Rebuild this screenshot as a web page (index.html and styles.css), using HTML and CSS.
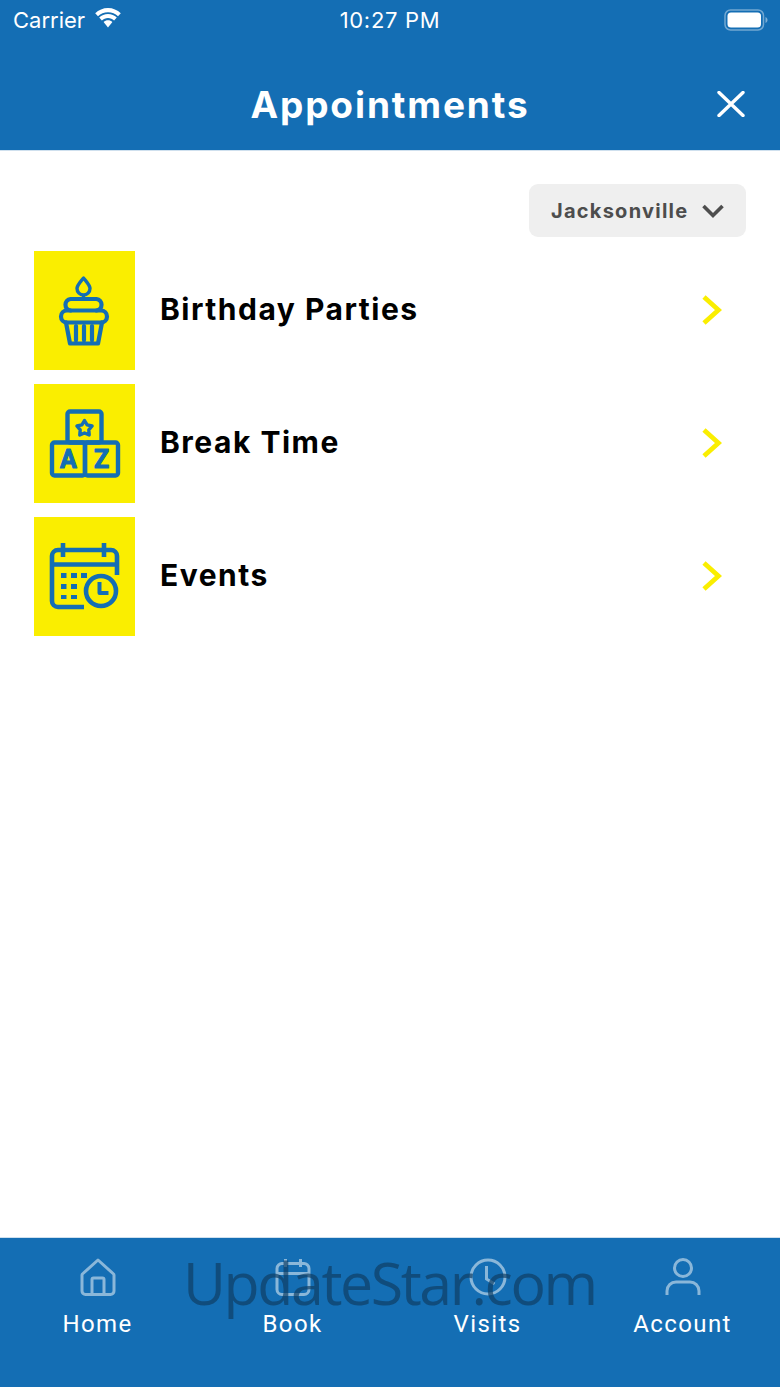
FILE: index.html
```html
<!DOCTYPE html>
<html lang="en">
<head>
<meta charset="utf-8">
<title>Appointments</title>
<link rel="stylesheet" href="styles.css">
</head>
<body>
<div class="app">
  <header class="header">
    <div class="status">
      <div class="status-left">
        <span>Carrier</span>
        <svg class="wifi" viewBox="0 0 28 20" width="28" height="20"><path d="M14 4.200c3.900 0 7.400 1.500 10 4l2.800-2.900C23.400 2 18.900 0 14 0S4.600 2 1.200 5.300L4 8.200c2.600-2.500 6.100-4 10-4z" fill="#fff"/><path d="M14 10c2.400 0 4.500.9 6.100 2.400l2.700-2.800C20.500 7.400 17.400 6 14 6S7.500 7.400 5.200 9.600l2.700 2.800C9.500 10.900 11.600 10 14 10z" fill="#fff"/><path d="M14 12.200c-1.700 0-3.200.6-4.400 1.700L14 19.500l4.400-5.600c-1.200-1.100-2.700-1.700-4.400-1.700z" fill="#fff"/></svg>
      </div>
      <span class="status-time">10:27 PM</span>
      <div class="status-right">
        <svg viewBox="0 0 44 22" width="44" height="22"><rect x="1" y="1" width="38.500" height="20" rx="5.500" fill="none" stroke="#fff" stroke-opacity=".4" stroke-width="1.500"/><rect x="3.500" y="3.500" width="33.500" height="15" rx="3.500" fill="#fff"/><path d="M41.500 8v6c1.200-.5 2-1.700 2-3s-.8-2.500-2-3z" fill="#fff" fill-opacity=".45"/></svg>
      </div>
    </div>
    <div class="nav">
      <h1 class="title">Appointments</h1>
      <svg class="close" viewBox="0 0 28 26" width="28" height="26"><path d="M2 1.500 26 24.500M26 1.500 2 24.500" stroke="#fff" stroke-width="3.400" stroke-linecap="round" fill="none"/></svg>
    </div>
  </header>

  <main class="content">
    <div class="filter-row">
      <div class="select">
        <span>Jacksonville</span>
        <svg viewBox="0 0 24 16" width="24" height="16"><path d="M2.500 3 12 12.500 21.500 3" stroke="#4d4d4d" stroke-width="3.600" fill="none"/></svg>
      </div>
    </div>
    <ul class="list">
      <li class="row">
        <div class="tile">
          <svg viewBox="0 0 101 119" width="101" height="119" fill="none" stroke="#146eb4" stroke-width="4.200" stroke-linejoin="round" stroke-linecap="round">
            <path stroke-width="3.400" d="M49.500 27c-3.500 4.500-6.500 7.500-6.500 10.500a6.500 6.500 0 0 0 13 0c0-3-3-6-6.500-10.500zM49.500 44v4"/>
            <path d="M36.500 59.500a5.800 5.800 0 0 1 0-11.500h26a5.800 5.800 0 0 1 0 11.500"/>
            <path d="M33 59.500h34a6 6 0 0 1 0 12H33a6 6 0 0 1 0-12z"/>
            <path d="M32 71.500 36 92.500H64L68 71.500M42 75v14M50 75v14M58 75v14"/>
          </svg>
        </div>
        <span class="row-label">Birthday Parties</span>
        <svg class="chev" viewBox="0 0 20 30" width="20" height="30"><path d="M2 2 16.500 15 2 28" stroke="#faee00" stroke-width="4.800" fill="none"/></svg>
      </li>
      <li class="row">
        <div class="tile">
          <svg viewBox="0 0 101 119" width="101" height="119" fill="none" stroke="#146eb4" stroke-width="4.400" stroke-linejoin="round">
            <rect x="33.500" y="27.500" width="34" height="31" rx="2.500"/>
            <rect x="18" y="58.500" width="33" height="33" rx="2.500"/>
            <rect x="51" y="58.500" width="33" height="33" rx="2.500"/>
            <path stroke-width="3.400" d="M50.500 36.500 53.100 40.900 58.100 42 54.800 45.900 55.200 51 50.500 49 45.800 51 46.200 45.900 42.900 42 47.900 40.900z"/>
            <text class="block-letter" x="34.500" y="84" text-anchor="middle">A</text>
            <text class="block-letter" x="67.500" y="84" text-anchor="middle">Z</text>
          </svg>
        </div>
        <span class="row-label">Break Time</span>
        <svg class="chev" viewBox="0 0 20 30" width="20" height="30"><path d="M2 2 16.500 15 2 28" stroke="#faee00" stroke-width="4.800" fill="none"/></svg>
      </li>
      <li class="row">
        <div class="tile">
          <svg viewBox="0 0 101 119" width="101" height="119" fill="none" stroke="#146eb4" stroke-width="4.600" stroke-linejoin="round">
            <path d="M83 58V39a6 6 0 0 0-6-6H24a6 6 0 0 0-6 6v45a6 6 0 0 0 6 6h26"/>
            <path d="M18 47.500h65M29 26v14M70 26v14"/>
            <circle cx="67" cy="74" r="15"/>
            <path d="M65.500 65v11h9" stroke-width="4"/>
            <path fill="#146eb4" stroke="none" d="M27 56h5.500v5H27zM37 56h6v5h-6zM47 56h6v5h-6zM27 67h5.500v5H27zM37 67h6v5h-6zM27 78h5.500v4H27zM37 78h6v4h-6z"/>
          </svg>
        </div>
        <span class="row-label">Events</span>
        <svg class="chev" viewBox="0 0 20 30" width="20" height="30"><path d="M2 2 16.500 15 2 28" stroke="#faee00" stroke-width="4.800" fill="none"/></svg>
      </li>
    </ul>
  </main>

  <nav class="tabs">
    <div class="tab">
      <svg class="tab-icon" viewBox="0 0 36 38" width="36" height="38"><path d="M18 2 33 15.500a2 2 0 0 1 1 2V33a3.500 3.500 0 0 1-3.500 3.500h-25A3.500 3.500 0 0 1 2 33V17.500a2 2 0 0 1 1-2zM12 36.500V21.500a1.500 1.500 0 0 1 1.500-1.500h9a1.500 1.500 0 0 1 1.500 1.500v15" fill="none" stroke="#fff" stroke-width="3" stroke-linejoin="round"/></svg>
      <span class="tab-label">Home</span>
    </div>
    <div class="tab">
      <svg class="tab-icon" viewBox="0 0 36 38" width="36" height="38"><path d="M7.500 5.500h21A5 5 0 0 1 34 10.500v21a5 5 0 0 1-5 5H7a5 5 0 0 1-5-5v-21a5 5 0 0 1 5.500-5zM2 15.500h32M10.500 1v8M25.500 1v8" fill="none" stroke="#fff" stroke-width="3"/></svg>
      <span class="tab-label">Book</span>
    </div>
    <div class="tab">
      <svg class="tab-icon" viewBox="0 0 38 38" width="38" height="38"><circle cx="19" cy="19" r="17" fill="none" stroke="#fff" stroke-width="3"/><path d="M17.500 8v13l8 5" fill="none" stroke="#fff" stroke-width="3"/></svg>
      <span class="tab-label">Visits</span>
    </div>
    <div class="tab">
      <svg class="tab-icon" viewBox="0 0 36 38" width="36" height="38"><circle cx="18" cy="10" r="8.500" fill="none" stroke="#fff" stroke-width="3"/><path d="M2 37v-4a9 9 0 0 1 9-9h14a9 9 0 0 1 9 9v4" fill="none" stroke="#fff" stroke-width="3"/></svg>
      <span class="tab-label">Account</span>
    </div>
  </nav>

  <div class="watermark">UpdateStar.com</div>
</div>
</body>
</html>
```

FILE: styles.css
```css
* { box-sizing: border-box; }
html, body { margin: 0; padding: 0; }
body { background: #fff; font-family: "Roboto", "Liberation Sans", sans-serif; }

.app {
  position: relative;
  width: 780px;
  height: 1387px;
  display: flex;
  flex-direction: column;
  overflow: hidden;
}

.header {
  height: 151px;
  background: #146eb4;
  border-bottom: 1px solid #cfe0ee;
  color: #fff;
  display: flex;
  flex-direction: column;
}

.status {
  height: 40px;
  padding: 0 13px;
  display: grid;
  grid-template-columns: 1fr auto 1fr;
  align-items: center;
  font-family: "Inter", "Liberation Sans", sans-serif;
  font-size: 22px;
}
.status-left { display: flex; align-items: center; gap: 9px; }
.wifi { margin-top: -4px; }
.status-right { display: flex; justify-content: flex-end; margin-right: -1px; margin-top: -1px; }
.status-time { letter-spacing: .7px; }

.nav {
  flex: 1;
  position: relative;
  display: flex;
  align-items: center;
  justify-content: center;
  padding-top: 18px;
}
.title {
  margin: 0;
  font-family: "Inter", "Roboto", sans-serif;
  font-size: 37px;
  font-weight: 700;
  letter-spacing: 1.9px;
}
.close { position: absolute; right: 35px; top: 51px; }

.content { flex: 1; padding: 33px 34px 0; }
.filter-row { display: flex; justify-content: flex-end; }
.select {
  width: 217px;
  height: 53px;
  background: #efefef;
  border-radius: 9px;
  padding: 0 21px 0 22px;
  display: flex;
  align-items: center;
  justify-content: space-between;
  color: #4d4d4d;
  font-family: "Inter", "Roboto", sans-serif;
  font-size: 20px;
  font-weight: 700;
  letter-spacing: 1.250px;
}

.list {
  list-style: none;
  margin: 14px 0 0;
  padding: 0;
  display: flex;
  flex-direction: column;
  gap: 14px;
}
.row { height: 119px; display: flex; align-items: center; }
.tile { width: 101px; height: 119px; background: #faee00; flex: none; }
.tile svg { display: block; }
.row-label {
  flex: 1;
  margin-left: 25px;
  font-family: "Inter", "Roboto", sans-serif;
  font-size: 30px;
  font-weight: 700;
  letter-spacing: 1.500px;
  color: #000;
  padding-bottom: 4px;
}
.chev { margin: 0 24px 2px 0; }
.block-letter {
  font-family: "Roboto", sans-serif;
  font-size: 25px;
  font-weight: 700;
  fill: #146eb4;
  stroke: #146eb4;
  stroke-width: 1px;
}

.tabs {
  height: 150px;
  background: #146eb4;
  border-top: 1px solid #cfe0ee;
  padding: 20px 0 0;
  display: grid;
  grid-template-columns: repeat(4, 195px);
}
.tab { display: flex; flex-direction: column; align-items: center; color: #fff; }
.tab-icon { opacity: .5; display: block; }
.tab-label { margin-top: 14px; font-size: 24px; letter-spacing: 1.4px; line-height: 28px; }

.watermark {
  position: absolute;
  left: 183px;
  top: 1253px;
  font-family: "Open Sans", "Noto Sans", sans-serif;
  font-size: 59px;
  letter-spacing: -2.400px;
  line-height: 58px;
  color: #0f3d63;
  opacity: .68;
  white-space: nowrap;
}
```
